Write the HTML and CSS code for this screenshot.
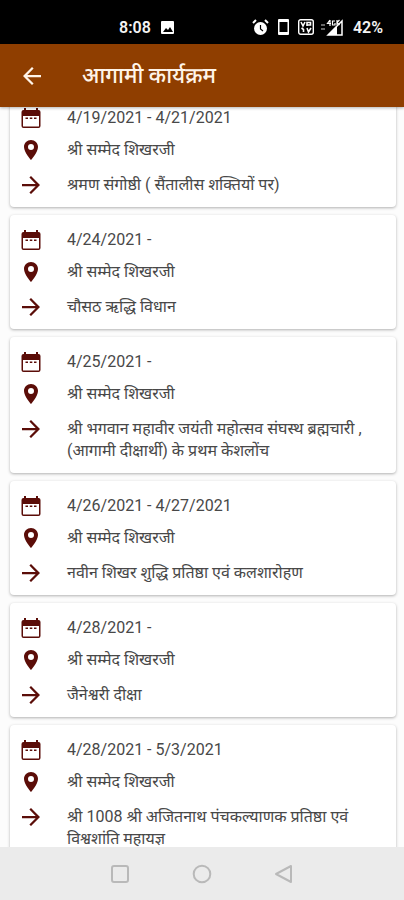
FILE: index.html
```html
<!DOCTYPE html>
<html lang="hi">
<head>
<meta charset="utf-8">
<meta name="viewport" content="width=device-width, initial-scale=1">
<title>आगामी कार्यक्रम</title>
<link rel="stylesheet" href="styles.css">
</head>
<body>
<svg class="defs" aria-hidden="true">
  <symbol id="calendar" viewBox="0 0 20 22">
    <path fill-rule="evenodd" d="M3 1h2v2h10V1h2v2h.5q2 0 2 2v14q0 2-2 2h-15q-2 0-2-2V5q0-2 2-2H3zM2 9v10q0 .5.5.5h15q.5 0 .5-.5V9z"/>
    <path d="M4.500 10.500h2.500v1.500h-2.500zM8.800 10.500h2.500v1.500H8.800zM13 10.500h2.500v1.500h-2.500z"/>
  </symbol>
  <symbol id="pin" viewBox="5 2 14 20">
    <path d="M12 2C8.130 2 5 5.130 5 9c0 5.250 7 13 7 13s7-7.750 7-13c0-3.870-3.130-7-7-7zm0 10a3 3 0 1 1 0-6 3 3 0 0 1 0 6z"/>
  </symbol>
  <symbol id="arrow" viewBox="4 4 16 16">
    <path d="M12 4l-1.410 1.410L16.170 11H4v2h12.170l-5.580 5.590L12 20l8-8z"/>
  </symbol>
</svg>
<div class="screen">
  <div class="status">
    <div class="status-left">
      <span>8:08</span>
      <svg width="13" height="13" viewBox="0 0 13 13"><rect width="13" height="13" rx="1" fill="#fff"/><path d="M2 11l3-4 2 2 2-3 3 5z" fill="#000"/></svg>
    </div>
    <div class="status-right">
      <svg width="17" height="17" viewBox="0 0 17 17"><circle cx="8.500" cy="9.500" r="6.500" fill="#fff"/><path d="M1 4l3-3M16 4l-3-3" stroke="#fff" stroke-width="2"/><path d="M8.500 6v4l2.500 2" fill="none" stroke="#000" stroke-width="1.200"/></svg>
      <svg width="11" height="16" viewBox="0 0 11 16"><path fill="#fff" fill-rule="evenodd" d="M1 0h9q1 0 1 1v14q0 1-1 1H1q-1 0-1-1V1q0-1 1-1zM1.500 3v10h8V3z"/></svg>
      <svg width="16" height="16" viewBox="0 0 16 16" fill="none" stroke="#fff"><rect x=".7" y=".7" width="14.600" height="14.600" rx="2" stroke-width="1.400"/><path d="M3 3l2 4 2-4M9 7V3.500h3.500V6H9M3.500 9l2 1.500V13M9 9l1.500 4L13 9" stroke-width="1.600"/></svg>
      <svg class="signal" width="23" height="17" viewBox="0 0 23 17"><path d="M0 6h4M0 10h4" stroke="#888" stroke-width="1.500"/><path d="M7 16L21 2v14z" fill="none" stroke="#fff" stroke-width="1.500"/><path d="M7 16l9-9v9z" fill="#fff"/><path d="M9 1L6.500 4.500H10M9 1v6M14 2h-2.500v4H14V4M16 1v5M18.500 1L16 3.500 18.500 6" fill="none" stroke="#fff" stroke-width="1.200"/></svg>
      <span>42%</span>
    </div>
  </div>
  <header class="appbar">
    <button class="back" type="button" aria-label="वापस"><svg width="18" height="18" viewBox="4 4 16 16"><path fill="currentColor" d="M20 11H7.830l5.590-5.590L12 4l-8 8 8 8 1.410-1.410L7.830 13H20z"/></svg></button>
    <h1>आगामी कार्यक्रम</h1>
  </header>
  <main class="content">
    <ul class="events">
      <li class="card">
        <svg class="cal"><use href="#calendar"/></svg><p>4/19/2021 - 4/21/2021</p>
        <svg class="pin"><use href="#pin"/></svg><p>श्री सम्मेद शिखरजी</p>
        <svg class="arr"><use href="#arrow"/></svg><p class="detail">श्रमण संगोष्ठी ( सैंतालीस शक्तियों पर)</p>
      </li>
      <li class="card">
        <svg class="cal"><use href="#calendar"/></svg><p>4/24/2021 -</p>
        <svg class="pin"><use href="#pin"/></svg><p>श्री सम्मेद शिखरजी</p>
        <svg class="arr"><use href="#arrow"/></svg><p class="detail">चौसठ ऋद्धि विधान</p>
      </li>
      <li class="card">
        <svg class="cal"><use href="#calendar"/></svg><p>4/25/2021 -</p>
        <svg class="pin"><use href="#pin"/></svg><p>श्री सम्मेद शिखरजी</p>
        <svg class="arr"><use href="#arrow"/></svg><p class="detail">श्री भगवान महावीर जयंती महोत्सव संघस्थ ब्रह्मचारी , (आगामी दीक्षार्थी) के प्रथम केशलोंच</p>
      </li>
      <li class="card">
        <svg class="cal"><use href="#calendar"/></svg><p>4/26/2021 - 4/27/2021</p>
        <svg class="pin"><use href="#pin"/></svg><p>श्री सम्मेद शिखरजी</p>
        <svg class="arr"><use href="#arrow"/></svg><p class="detail">नवीन शिखर शुद्धि प्रतिष्ठा एवं कलशारोहण</p>
      </li>
      <li class="card">
        <svg class="cal"><use href="#calendar"/></svg><p>4/28/2021 -</p>
        <svg class="pin"><use href="#pin"/></svg><p>श्री सम्मेद शिखरजी</p>
        <svg class="arr"><use href="#arrow"/></svg><p class="detail">जैनेश्वरी दीक्षा</p>
      </li>
      <li class="card">
        <svg class="cal"><use href="#calendar"/></svg><p>4/28/2021 - 5/3/2021</p>
        <svg class="pin"><use href="#pin"/></svg><p>श्री सम्मेद शिखरजी</p>
        <svg class="arr"><use href="#arrow"/></svg><p class="detail">श्री 1008 श्री अजितनाथ पंचकल्याणक प्रतिष्ठा एवं विश्वशांति महायज्ञ</p>
      </li>
    </ul>
  </main>
  <nav class="navbar">
    <button type="button" aria-label="Recent"><svg width="20" height="20" viewBox="0 0 20 20"><rect x="2" y="2" width="16" height="16" rx="2"/></svg></button>
    <button type="button" aria-label="Home"><svg width="20" height="20" viewBox="0 0 20 20"><circle cx="10" cy="10" r="8.300"/></svg></button>
    <button type="button" aria-label="Back"><svg width="20" height="20" viewBox="0 0 20 20"><path d="M17 2v16L2 10z" stroke-linejoin="round"/></svg></button>
  </nav>
</div>
</body>
</html>
```
FILE: styles.css
```css
* { box-sizing: border-box; }
body {
  margin: 0;
  font-family: Roboto, "Noto Sans Devanagari", "Noto Sans", sans-serif;
  color: #484848;
  background: #fcfcfc;
}
.defs { display: none; }
h1, p, ul { margin: 0; padding: 0; }
button { border: 0; padding: 0; background: none; display: grid; place-items: center; }
.screen { display: flex; flex-direction: column; height: 100vh; }
.status {
  flex: none;
  display: flex;
  justify-content: space-between;
  height: 44px;
  padding: 10px 21px 0 119px;
  background: #000;
  color: #f4f4f4;
  font-size: 16px;
  font-weight: 600;
}
.status-left, .status-right { display: flex; align-items: center; gap: 10px; }
.status-right { gap: 9px; }
.signal { margin-left: -2px; }
.appbar {
  flex: none;
  position: relative;
  display: flex;
  align-items: center;
  gap: 34px;
  height: 63px;
  padding: 0 16px;
  background: #8f3e00;
  color: #fff4e8;
  box-shadow: 0 1px 3px rgba(0, 0, 0, .3);
}
.back { width: 32px; height: 32px; color: inherit; }
h1 { font-size: 22px; line-height: 32px; font-weight: 500; }
.content { flex: 1; min-height: 0; overflow: hidden; }
.events {
  display: grid;
  gap: 8px;
  margin-top: -14px;
  padding: 0 8px 0 10px;
  list-style: none;
}
.card {
  display: grid;
  grid-template-columns: 12px 1fr;
  grid-template-rows: 32px 32px auto;
  column-gap: 30px;
  align-items: center;
  justify-items: start;
  padding: 9px 16px 11px 15px;
  border-radius: 4px;
  background: #fff;
  box-shadow: 0 1px 3px rgba(0, 0, 0, .3);
}
.card p { font-size: 16px; line-height: 22px; }
.card .detail { margin-top: 8px; }
.card svg { fill: #5b0d08; justify-self: center; }
.cal { width: 20px; height: 22px; }
.pin { width: 14px; height: 20px; }
.card .arr { width: 18px; height: 18px; align-self: start; margin-top: 10px; }
.navbar {
  flex: none;
  display: flex;
  justify-content: center;
  gap: 62px;
  height: 53px;
  background: #ebebeb;
}
.navbar svg { fill: none; stroke: #b9b9b9; stroke-width: 2; }
```
